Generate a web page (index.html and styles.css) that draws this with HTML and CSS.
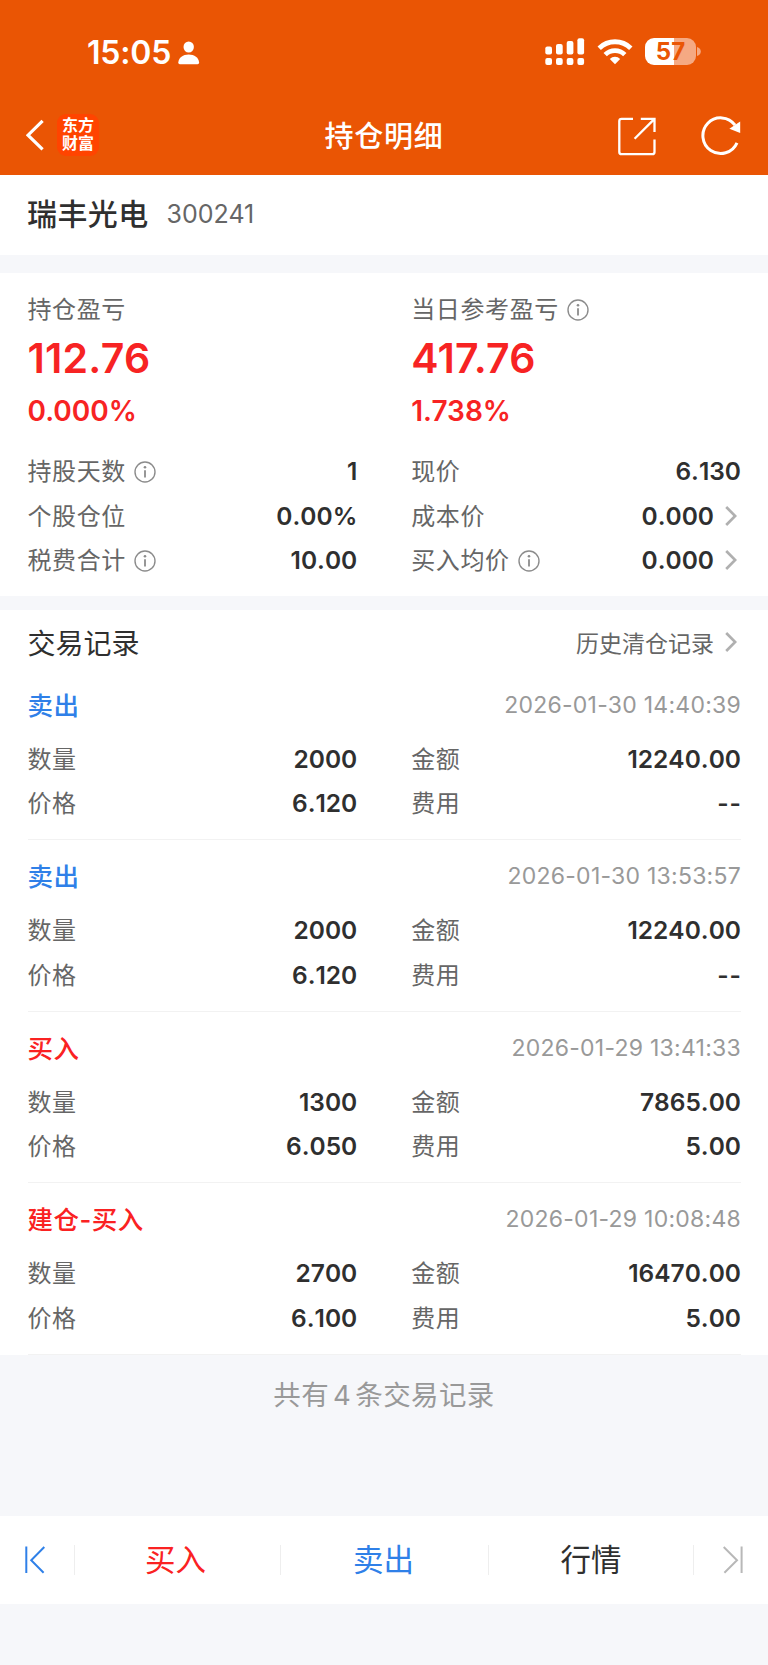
FILE: index.html
```
<!DOCTYPE html>
<html lang="zh-CN">
<head>
    <meta charset="UTF-8">
    <meta name="viewport" content="width=device-width, initial-scale=1.0">
    <title>持仓明细</title>
    <link rel="stylesheet" href="styles.css">
</head>
<body>
    <!-- shared icons -->
    <svg class="defs" width="0" height="0">
        <symbol id="info" viewBox="0 0 22 22">
            <circle cx="11" cy="11" r="10" fill="none" stroke="#8c8c8c" stroke-width="1.4"/>
            <circle cx="11" cy="6.3" r="1.3" fill="#8c8c8c"/>
            <path d="M11 9.2V16.6" stroke="#8c8c8c" stroke-width="1.8"/>
        </symbol>
        <symbol id="arrow" viewBox="0 0 12 20">
            <path d="M1.2 1L10.2 10L1.2 19" fill="none" stroke="#b0b0b0" stroke-width="2.7"/>
        </symbol>
    </svg>

    <header class="header">
        <div class="status">
            <div class="clock">
                <span class="time">15:05</span>
                <svg width="22" height="24" viewBox="0 0 22 24" fill="#fff">
                    <ellipse cx="10.7" cy="6" rx="5.2" ry="5.6"/>
                    <path d="M0.3 21.5C0.6 16.7 5 13.6 10.7 13.6S20.8 16.7 21.1 21.5Q21.2 23.2 19.6 23.2H1.8Q0.2 23.2 0.3 21.5Z"/>
                </svg>
            </div>
            <div class="signals">
                <svg width="40" height="28" viewBox="0 0 40 28" fill="#fff">
                    <rect x="0.3" y="8.6" width="6.7" height="7.8" rx="2"/>
                    <rect x="11" y="6" width="6.7" height="10.4" rx="2"/>
                    <rect x="21.7" y="3.1" width="6.7" height="13.3" rx="2"/>
                    <rect x="32.4" y="0.2" width="6.7" height="16.2" rx="2"/>
                    <rect x="0.3" y="20" width="6.7" height="7" rx="2"/>
                    <rect x="11" y="20" width="6.7" height="7" rx="2"/>
                    <rect x="21.7" y="20" width="6.7" height="7" rx="2"/>
                    <rect x="32.4" y="20" width="6.7" height="7" rx="2"/>
                </svg>
                <svg class="wifi" width="36" height="26" viewBox="0 0 36 26" fill="none" stroke="#fff" stroke-width="4.8">
                    <path d="M2.2 9.2A22.6 22.6 0 0 1 33.8 9.2"/>
                    <path d="M8.2 15.6A14 14 0 0 1 27.8 15.6"/>
                    <path d="M18 25.2L12.8 20A7.4 7.4 0 0 1 23.2 20Z" fill="#fff" stroke="none"/>
                </svg>
                <div class="battery">57</div>
                <svg class="nub" width="4" height="9" viewBox="0 0 4 9"><path d="M0 0Q3.8 1.2 3.8 4.5T0 9Z" fill="#f5a983"/></svg>
            </div>
        </div>
        <nav class="nav">
            <div class="nav-left">
                <svg width="18" height="32" viewBox="0 0 18 32"><path d="M16.6 1.8L2 16.2L16.6 30.4" fill="none" stroke="#fff" stroke-width="3.2"/></svg>
                <div class="logo">东方<br>财富</div>
            </div>
            <h1 class="title">持仓明细</h1>
            <div class="nav-right">
                <svg width="38" height="39" viewBox="0 0 38 39" fill="none" stroke="#fff" stroke-width="2.3">
                    <path d="M15 1.8H3.6Q1.3 1.8 1.3 4V35Q1.3 37.2 3.6 37.2H34.2Q36.5 37.2 36.5 35V22.4"/>
                    <path d="M22.8 1.8H36.5V15M36 2.4L16.6 21.8"/>
                </svg>
                <svg width="40" height="40" viewBox="0 0 40 40">
                    <path d="M34.1 9.2A17.8 17.8 0 1 0 36 26.8" fill="none" stroke="#fff" stroke-width="3"/>
                    <path d="M39.2 5.4V17L28.4 12.8Z" fill="#fff"/>
                </svg>
            </div>
        </nav>
    </header>

    <section class="stock">
        <span class="stock-name">瑞丰光电</span>
        <span class="stock-code">300241</span>
    </section>

    <section class="position">
        <div class="column">
            <div class="label">持仓盈亏</div>
            <div class="profit">112.76</div>
            <div class="percent">0.000%</div>
            <div class="row"><span class="label">持股天数<svg class="info"><use href="#info"/></svg></span><b>1</b></div>
            <div class="row"><span class="label">个股仓位</span><b>0.00%</b></div>
            <div class="row"><span class="label">税费合计<svg class="info"><use href="#info"/></svg></span><b>10.00</b></div>
        </div>
        <div class="column">
            <div class="label">当日参考盈亏<svg class="info"><use href="#info"/></svg></div>
            <div class="profit">417.76</div>
            <div class="percent">1.738%</div>
            <div class="row"><span class="label">现价</span><b>6.130</b></div>
            <div class="row"><span class="label">成本价</span><b>0.000<svg class="arrow"><use href="#arrow"/></svg></b></div>
            <div class="row"><span class="label">买入均价<svg class="info"><use href="#info"/></svg></span><b>0.000<svg class="arrow"><use href="#arrow"/></svg></b></div>
        </div>
    </section>

    <section class="records">
        <div class="records-head">
            <h2>交易记录</h2>
            <a class="history">历史清仓记录<svg class="arrow"><use href="#arrow"/></svg></a>
        </div>
        <article class="record">
            <div class="record-head"><span class="type sell">卖出</span><time>2026-01-30 14:40:39</time></div>
            <div class="grid">
                <div class="row"><span class="label">数量</span><b>2000</b></div>
                <div class="row"><span class="label">金额</span><b>12240.00</b></div>
                <div class="row"><span class="label">价格</span><b>6.120</b></div>
                <div class="row"><span class="label">费用</span><b class="none">--</b></div>
            </div>
        </article>
        <article class="record">
            <div class="record-head"><span class="type sell">卖出</span><time>2026-01-30 13:53:57</time></div>
            <div class="grid">
                <div class="row"><span class="label">数量</span><b>2000</b></div>
                <div class="row"><span class="label">金额</span><b>12240.00</b></div>
                <div class="row"><span class="label">价格</span><b>6.120</b></div>
                <div class="row"><span class="label">费用</span><b class="none">--</b></div>
            </div>
        </article>
        <article class="record">
            <div class="record-head"><span class="type buy">买入</span><time>2026-01-29 13:41:33</time></div>
            <div class="grid">
                <div class="row"><span class="label">数量</span><b>1300</b></div>
                <div class="row"><span class="label">金额</span><b>7865.00</b></div>
                <div class="row"><span class="label">价格</span><b>6.050</b></div>
                <div class="row"><span class="label">费用</span><b>5.00</b></div>
            </div>
        </article>
        <article class="record">
            <div class="record-head"><span class="type buy">建仓-买入</span><time>2026-01-29 10:08:48</time></div>
            <div class="grid">
                <div class="row"><span class="label">数量</span><b>2700</b></div>
                <div class="row"><span class="label">金额</span><b>16470.00</b></div>
                <div class="row"><span class="label">价格</span><b>6.100</b></div>
                <div class="row"><span class="label">费用</span><b>5.00</b></div>
            </div>
        </article>
    </section>

    <p class="total">共有<span>4</span>条交易记录</p>

    <footer class="toolbar">
        <a class="edge first"><svg width="20" height="28" viewBox="0 0 20 28" fill="none" stroke="#2f80e8" stroke-width="2"><path d="M1.3 0.5V27M19.3 1L6.2 14.2L18.6 26.8"/></svg></a>
        <a class="buy"><span>买入</span></a>
        <a class="sell"><span>卖出</span></a>
        <a><span>行情</span></a>
        <a class="edge last"><svg width="20" height="28" viewBox="0 0 20 28" fill="none" stroke="#b8b8b8" stroke-width="2"><path d="M18.6 0.5V27M0.7 1L14 14.2L1.4 26.8"/></svg></a>
    </footer>
</body>
</html>
```
FILE: styles.css
```
* {
    box-sizing: border-box;
}
body {
    margin: 0;
    height: 1665px;
    display: flex;
    flex-direction: column;
    font-family: Inter, "Noto Sans CJK SC", sans-serif;
    background: #f6f7fa;
    color: #2f2f2f;
}
svg {
    display: block;
    flex: none;
}
.defs {
    position: absolute;
}

/* header */
.header {
    height: 174.5px;
    background: #ea5504;
    color: #fff;
}
.status {
    display: flex;
    justify-content: space-between;
    height: 98px;
    padding: 7px 67px 0 87px;
}
.clock, .signals {
    display: flex;
    align-items: center;
}
.clock {
    gap: 7px;
}
.time {
    font-size: 32px;
    font-weight: 600;
    letter-spacing: -0.2px;
}
.signals {
    padding-bottom: 2px;
}
.wifi {
    margin: 0 12px;
}
.battery {
    width: 51px;
    height: 27px;
    border-radius: 9px;
    background: linear-gradient(90deg, #fff 29px, #f5a983 29px);
    color: #ea5504;
    font-size: 24px;
    font-weight: 700;
    line-height: 27px;
    text-align: center;
}
.nub {
    margin-left: 1px;
}
.nav {
    display: grid;
    grid-template-columns: 1fr auto 1fr;
    align-items: center;
    height: 76px;
    padding: 0 27px 0 26px;
}
.nav-left, .nav-right {
    display: flex;
    align-items: center;
}
.nav-left {
    gap: 13px;
    padding-bottom: 2px;
}
.logo {
    width: 42px;
    height: 42px;
    padding-top: 3px;
    border-radius: 9px;
    background: #ff4400;
    font-size: 16px;
    font-weight: 700;
    line-height: 17.5px;
    text-align: center;
}
.title {
    margin: 0;
    padding: 0 0 5px 1px;
    font-size: 29px;
    font-weight: 500;
    letter-spacing: 0.8px;
}
.nav-right {
    justify-content: flex-end;
    gap: 45px;
}

/* stock name */
.stock {
    display: flex;
    align-items: center;
    gap: 18px;
    height: 80.5px;
    padding: 0 27px 2px;
    background: #fff;
}
.stock-name {
    padding-bottom: 3px;
    font-size: 30px;
    font-weight: 500;
    letter-spacing: 0.4px;
}
.stock-code {
    font-size: 25px;
    color: #666;
}

/* position summary */
.position {
    display: grid;
    grid-template-columns: 1fr 1fr;
    column-gap: 54px;
    height: 323px;
    margin-top: 18px;
    padding: 14px 27px 0 27.5px;
    background: #fff;
}
.label {
    display: flex;
    align-items: center;
    height: 44px;
    padding-bottom: 3px;
    font-size: 24px;
    letter-spacing: 0.6px;
    color: #666;
}
.info {
    width: 22px;
    height: 22px;
    margin: 4px 0 0 8px;
}
.arrow {
    width: 12px;
    height: 20px;
    margin: 0 4px 0 11px;
}
.profit {
    font-size: 41px;
    font-weight: 600;
    letter-spacing: 0.2px;
    line-height: 54px;
    color: #f72323;
}
.percent {
    margin-bottom: 12px;
    font-size: 28px;
    font-weight: 600;
    line-height: 52px;
    color: #f72323;
}
.row {
    display: flex;
    align-items: center;
    justify-content: space-between;
    height: 44.6px;
}
.row b {
    display: flex;
    align-items: center;
    font-size: 24.5px;
    font-weight: 600;
    font-kerning: none;
}
.row .none {
    letter-spacing: 1px;
    margin-right: -1px;
}

/* trade records */
.records {
    height: 744.5px;
    margin-top: 14px;
    padding: 0 27px 0 27.5px;
    background: #fff;
}
.records-head {
    display: flex;
    align-items: center;
    justify-content: space-between;
    height: 59px;
    padding-top: 4px;
}
.records-head h2 {
    margin: 0;
    font-size: 28px;
    font-weight: 400;
}
.history {
    display: flex;
    align-items: center;
    font-size: 23px;
    color: #666;
}
.record {
    height: 171.4px;
    padding-top: 12px;
    border-bottom: 1px solid #f2f2f2;
}
.record-head {
    display: flex;
    align-items: center;
    justify-content: space-between;
    height: 48px;
    margin-bottom: 7.5px;
}
.type {
    padding-bottom: 3px;
    font-size: 25.5px;
    font-weight: 500;
    letter-spacing: 0.5px;
}
.record time {
    font-size: 23px;
    letter-spacing: 0.25px;
    color: #999;
}
.grid {
    display: grid;
    grid-template-columns: 1fr 1fr;
    column-gap: 54px;
}
.buy {
    color: #fa2222;
}
.sell {
    color: #2f80e8;
}

.total {
    display: flex;
    justify-content: center;
    gap: 4px;
    margin: 0;
    height: 161.5px;
    line-height: 81px;
    font-size: 27.5px;
    letter-spacing: 0.4px;
    color: #999;
}

/* bottom toolbar */
.toolbar {
    display: grid;
    grid-template-columns: 75px 206px 208px 205px 74px;
    align-items: center;
    height: 88px;
    background: #fff;
}
.toolbar a {
    display: flex;
    align-items: center;
    justify-content: center;
    height: 30px;
    font-size: 30.5px;
    border-right: 1px solid #eee;
}
.toolbar span {
    padding-bottom: 5px;
}
.toolbar .buy {
    padding-right: 4px;
}
.toolbar .sell {
    padding-right: 2px;
}
.toolbar .first {
    padding-right: 5px;
}
.toolbar .last {
    padding-left: 3px;
    border-right: 0;
}
```
